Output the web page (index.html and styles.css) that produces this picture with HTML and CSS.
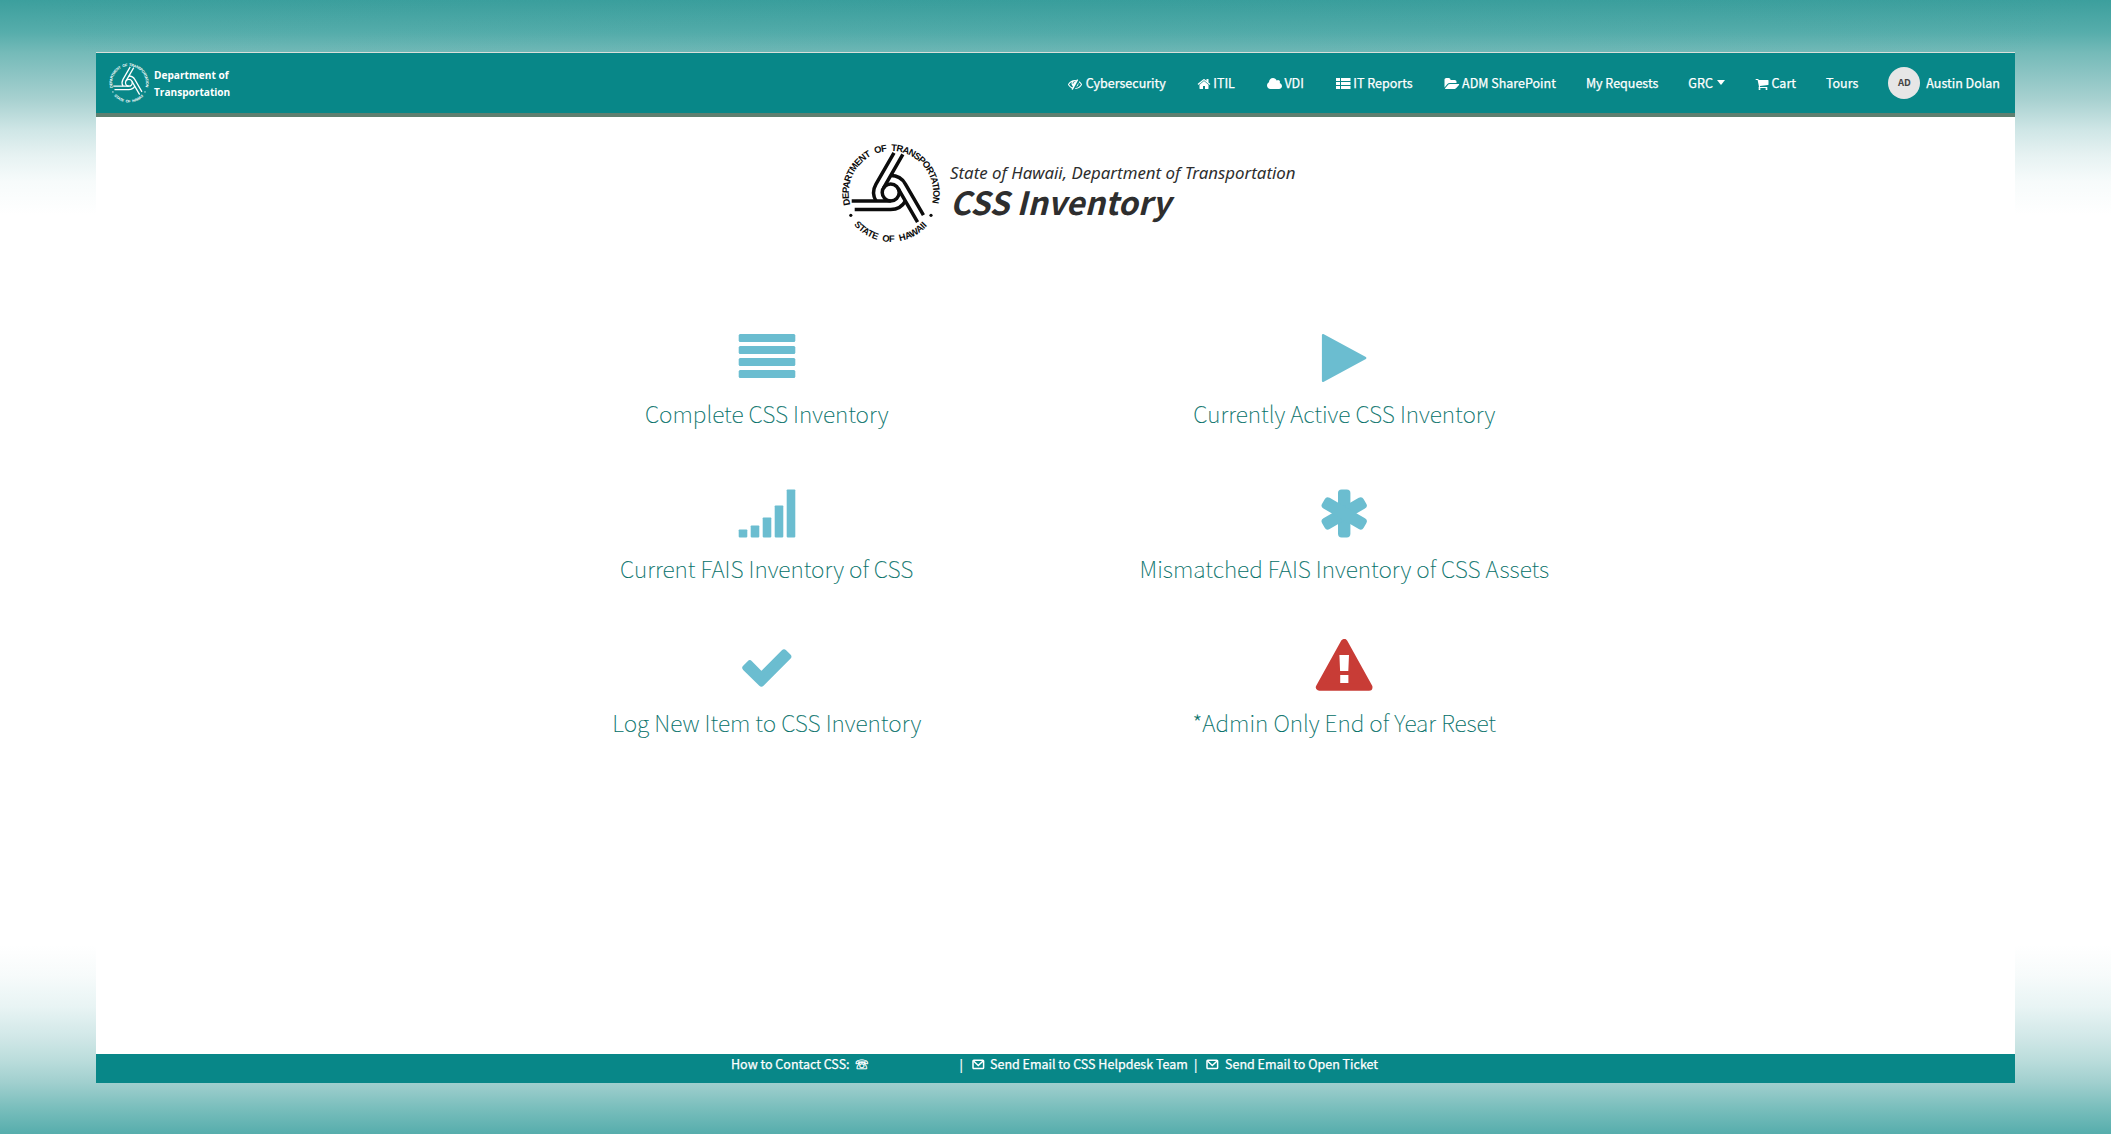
FILE: index.html
```html
<!DOCTYPE html>
<html lang="en">
<head>
<meta charset="utf-8">
<title>CSS Inventory</title>
<link rel="stylesheet" href="styles.css">
</head>
<body>
<div class="page">
  <header class="navbar">
    <a class="brand">
      <svg class="brand-seal" viewBox="-50 -50 100 100">
        <text class="seal-text"><textPath href="#ring-top" textLength="154" lengthAdjust="spacing">DEPARTMENT OF TRANSPORTATION</textPath></text>
        <text class="seal-text"><textPath href="#ring-bottom" textLength="83" lengthAdjust="spacing">STATE OF HAWAII</textPath></text>
        <circle cx="-40.2" cy="22.3" r="1.6" fill="currentColor"/>
        <circle cx="40" cy="22.3" r="1.6" fill="currentColor"/>
        <g transform="translate(-.3 -.5)" fill="none" stroke="currentColor" stroke-width="3.2">
          <circle r="8.5"/>
          <path d="M-39 8.5H0M-36 17H0A17 17 0 0 0 14.8 8.3"/>
          <path transform="rotate(120)" d="M-39 8.5H0M-36 17H0A17 17 0 0 0 14.8 8.3"/>
          <path transform="rotate(240)" d="M-39 8.5H0M-36 17H0A17 17 0 0 0 14.8 8.3"/>
        </g>
      </svg>
      <span class="brand-name">Department of<br>Transportation</span>
    </a>
    <nav class="menu">
      <a class="item"><svg class="fa wide" viewBox="0 0 1792 1792"><path d="M555 1335l78-141q-87-63-136-159t-49-203q0-121 61-225-229 117-381 353 167 258 427 375zm389-759q0-20-14-34t-34-14q-125 0-214.5 89.5t-89.5 214.5q0 20 14 34t34 14 34-14 14-34q0-86 61-147t147-61q20 0 34-14t14-34zm363-191q0 7-1 9-106 189-316 567t-315 566l-49 89q-10 16-28 16-12 0-134-70-16-10-16-28 0-12 44-87-143-65-263.500-173t-208.500-245q-20-31-20-69t20-69q153-235 380-371t496-136q89 0 180 17l54-97q10-16 28-16 5 0 18 6t31 15.500 33 18.500 31.500 18.500 19.500 11.500q16 10 16 27zm37 447q0 139-79 253.500t-209 164.500l280-502q8 45 8 84zm448 128q0 35-20 69-39 64-109 145-150 172-347.500 267t-419.500 95l74-132q212-18 392.500-137t301.500-307q-115-179-282-294l63-112q95 64 182.500 153t144.500 182q20 34 20 69z"/></svg>Cybersecurity</a>
      <a class="item"><svg class="fa home" viewBox="0 0 1792 1792"><path d="M1472 992v480q0 26-19 45t-45 19h-384v-384h-256v384h-384q-26 0-45-19t-19-45v-480q0-1 .5-3t.5-3l575-474 575 474q1 2 1 6zm223-69l-62 74q-8 9-21 11h-3q-13 0-21-7l-692-577-692 577q-12 8-24 7-13-2-21-11l-62-74q-8-10-7-23.500t11-21.500l719-599q32-26 76-26t76 26l244 204v-195q0-14 9-23t23-9h192q14 0 23 9t9 23v408l219 182q10 8 11 21.500t-7 23.500z"/></svg>ITIL</a>
      <a class="item"><svg class="fa wide" viewBox="0 0 1792 1792"><path d="M1920 1152q0 159-112.500 271.500t-271.500 112.500h-1088q-185 0-316.500-131.500t-131.500-316.500q0-132 71-241.500t187-163.500q-2-28-2-43 0-212 150-362t362-150q158 0 286.500 88t187.500 230q70-62 166-62 106 0 181 75t75 181q0 75-41 138 129 30 213 134.500t84 239.500z"/></svg>VDI</a>
      <a class="item"><svg class="fa wide" viewBox="0 0 14 14"><path d="M0 1h4v3H0zM5 1h9.500v3H5zM0 5h4v3H0zM5 5h9.500v3H5zM0 9h4v3H0zM5 9h9.500v3H5z"/></svg>IT Reports</a>
      <a class="item"><svg class="fa folder" viewBox="0 0 1792 1792"><path d="M1943 952q0 31-31 66l-336 396q-43 51-120.500 86.500t-143.500 35.500h-1088q-34 0-60.500-13t-26.500-43q0-31 31-66l336-396q43-51 120.500-86.500t143.500-35.500h1088q34 0 60.500 13t26.500 43zm-343-344v160h-832q-94 0-197 47.500t-164 119.500l-337 396-5 6q0-4-.5-12.500t-.5-12.500v-960q0-92 66-158t158-66h320q92 0 158 66t66 158v32h544q92 0 158 66t66 158z"/></svg>ADM SharePoint</a>
      <a class="item">My Requests</a>
      <a class="item">GRC<span class="caret"></span></a>
      <a class="item"><svg class="fa cart" viewBox="0 0 1792 1792"><path d="M704 1536q0 52-38 90t-90 38-90-38-38-90 38-90 90-38 90 38 38 90zm896 0q0 52-38 90t-90 38-90-38-38-90 38-90 90-38 90 38 38 90zm128-1088v512q0 24-16.500 42.500t-40.500 21.500l-1044 122q13 60 13 70 0 16-24 64h920q26 0 45 19t19 45-19 45-45 19h-1024q-26 0-45-19t-19-45q0-11 8-31.500t16-36 21.500-40 15.500-29.500l-177-823h-204q-26 0-45-19t-19-45 19-45 45-19h256q16 0 28.500 6.500t19.500 15.500 13 24.500 8 26 5.500 29.500 4.500 26h1201q26 0 45 19t19 45z"/></svg>Cart</a>
      <a class="item">Tours</a>
      <a class="item"><span class="avatar">AD</span>Austin Dolan</a>
    </nav>
  </header>
  <main class="content">
    <section class="hero">
      <svg class="hero-seal" viewBox="-50 -50 100 100">
        <path id="ring-top" fill="none" d="M-40.6 11.6A42.2 42.2 0 1 1 40.6 11.6"/>
        <path id="ring-bottom" fill="none" d="M-37.2 31.7A48.9 48.9 0 0 0 37.2 31.7"/>
        <text class="seal-text"><textPath href="#ring-top" textLength="154" lengthAdjust="spacing">DEPARTMENT OF TRANSPORTATION</textPath></text>
        <text class="seal-text"><textPath href="#ring-bottom" textLength="83" lengthAdjust="spacing">STATE OF HAWAII</textPath></text>
        <circle cx="-40.2" cy="22.3" r="1.6" fill="currentColor"/>
        <circle cx="40" cy="22.3" r="1.6" fill="currentColor"/>
        <g transform="translate(-.3 -.5)" fill="none" stroke="currentColor" stroke-width="3.5">
          <circle r="8.5"/>
          <path d="M-39 8.5H0M-36 17H0A17 17 0 0 0 14.8 8.3"/>
          <path transform="rotate(120)" d="M-39 8.5H0M-36 17H0A17 17 0 0 0 14.8 8.3"/>
          <path transform="rotate(240)" d="M-39 8.5H0M-36 17H0A17 17 0 0 0 14.8 8.3"/>
        </g>
      </svg>
      <div class="hero-text">
        <p class="subtitle">State of Hawaii, Department of Transportation</p>
        <h1 class="title">CSS Inventory</h1>
      </div>
    </section>
    <section class="tiles">
      <a class="tile">
        <svg class="tile-icon" viewBox="0 0 60 56"><rect x="1.700" y="4" width="56.600" height="8" rx="1.500"/><rect x="1.700" y="16" width="56.600" height="8" rx="1.500"/><rect x="1.700" y="28" width="56.600" height="8" rx="1.500"/><rect x="1.700" y="40" width="56.600" height="8" rx="1.500"/></svg>
        <span class="tile-name">Complete CSS Inventory</span>
      </a>
      <a class="tile">
        <svg class="tile-icon" viewBox="0 0 60 56"><path stroke-width="2" stroke-linejoin="round" stroke="currentColor" d="M8.900 5v46L51.400 28z"/></svg>
        <span class="tile-name">Currently Active CSS Inventory</span>
      </a>
      <a class="tile">
        <svg class="tile-icon" viewBox="0 0 60 56"><rect x="1.700" y="44.400" width="8.600" height="8" rx=".8"/><rect x="13.700" y="40.400" width="8.600" height="12" rx=".8"/><rect x="25.700" y="32.400" width="8.600" height="20" rx=".8"/><rect x="37.700" y="20.400" width="8.600" height="32" rx=".8"/><rect x="49.700" y="4.400" width="8.600" height="48" rx=".8"/></svg>
        <span class="tile-name">Current FAIS Inventory of CSS</span>
      </a>
      <a class="tile">
        <svg class="tile-icon" viewBox="0 0 60 56"><g transform="translate(30.200 28.400)"><rect x="-6.200" y="-24" width="12.400" height="48" rx="3.600"/><rect x="-6.200" y="-24" width="12.400" height="48" rx="3.600" transform="rotate(60)"/><rect x="-6.200" y="-24" width="12.400" height="48" rx="3.600" transform="rotate(120)"/></g></svg>
        <span class="tile-name">Mismatched FAIS Inventory of CSS Assets</span>
      </a>
      <a class="tile">
        <svg class="tile-icon" viewBox="0 0 60 56"><path stroke="currentColor" stroke-width="6" stroke-linejoin="round" d="M8.300 28.800L12.800 24.300L24.400 36L47 13.400L51.300 17.700L24.400 44.600z"/></svg>
        <span class="tile-name">Log New Item to CSS Inventory</span>
      </a>
      <a class="tile">
        <svg class="tile-icon danger" viewBox="0 0 60 56"><path stroke="currentColor" stroke-width="7" stroke-linejoin="round" d="M30.200 3.500L5.400 48.300H55z"/><path class="mark" d="M25.400 16h9.600l-.7 16h-8.200zM26.200 36h8.200v8h-8.200z"/></svg>
        <span class="tile-name">*Admin Only End of Year Reset</span>
      </a>
    </section>
  </main>
  <footer class="footer">
    <span>How to Contact CSS:</span>
    <span class="phone">☏</span>
    <span>|</span>
    <svg class="mail" viewBox="0 0 13 11"><rect x="1" y="1.200" width="10.600" height="8.400" rx=".8"/><path d="M1.500 2L6.300 6.500L11.100 2"/></svg>
    <span>Send Email to CSS Helpdesk Team</span>
    <span>|</span>
    <svg class="mail" viewBox="0 0 13 11"><rect x="1" y="1.200" width="10.600" height="8.400" rx=".8"/><path d="M1.500 2L6.300 6.500L11.100 2"/></svg>
    <span>Send Email to Open Ticket</span>
  </footer>
</div>
</body>
</html>
```
FILE: styles.css
```css
* {
  box-sizing: border-box;
}

body {
  margin: 0;
  height: 1134px;
  padding: 52px 96px 51px;
  overflow: hidden;
  font: 400 12.5px/19px "Noto Sans CJK JP", sans-serif;
  background:
    radial-gradient(ellipse 1055px 160px at 50% 0, rgba(30, 145, 144, .12), transparent),
    linear-gradient(#3c9f9d 0, #56adab 32px, #74bab8 52px, #a6d0cf 98px, #cfe6e6 130px, #e6f2f2 155px, #f7fbfb 182px, #fff 215px, #fff 945px, #f7fbfb 975px, #e8f4f4 1007px, #d0e7e7 1038px, #bbdddc 1060px, #a0cfce 1083px, #7bbfbd 1107px, #56adac 1134px);
}

.page {
  display: flex;
  flex-direction: column;
  height: 1031px;
  background: #fff;
}

.navbar {
  display: flex;
  justify-content: space-between;
  align-items: center;
  height: 65px;
  padding: 0 15px 0 13px;
  border-top: 1px solid #d9dfda;
  border-bottom: 4px solid #5f7f70;
  background: #088788;
  color: #fff;
}

.brand {
  display: flex;
  align-items: center;
  gap: 5px;
}

.brand-seal {
  width: 40px;
  height: 40px;
  overflow: visible;
}

.brand-name {
  font: 700 10.1px/17.5px "Open Sans", sans-serif;
  padding-top: 2px;
}

.seal-text {
  font: 700 9.4px "Liberation Sans", sans-serif;
  word-spacing: 3px;
  fill: currentColor;
}

.menu {
  display: flex;
  align-items: center;
  gap: 30px;
  padding-bottom: 1px;
  -webkit-text-stroke: .25px #fff;
}

.item {
  display: flex;
  align-items: center;
  white-space: nowrap;
}

.fa {
  width: 14px;
  height: 14px;
  overflow: visible;
  fill: currentColor;
}

.wide {
  margin: 2px 3.5px 0 2px;
}

.folder {
  margin: 2px 4px 0 1.5px;
}

.home {
  margin: 2px 2.5px 0 1px;
}

.cart {
  margin: 2px 2px 0 0;
}

.caret {
  margin-left: 4.5px;
  border: 4.5px solid transparent;
  border-top: 5px solid #fff;
  border-bottom: 0;
}

.avatar {
  width: 32px;
  height: 32px;
  margin-right: 6px;
  border-radius: 50%;
  background: #e6e6e6;
  color: #444;
  font-size: 9.5px;
  font-weight: 700;
  line-height: 31px;
  text-align: center;
  -webkit-text-stroke: 0;
}

.content {
  flex: 1;
}

.hero {
  display: flex;
  gap: 9px;
  height: 126px;
  padding: 26px 0 0 745px;
  color: #2e2e2e;
}

.hero-seal {
  width: 100px;
  height: 100px;
  overflow: visible;
  color: #0c0c0c;
}

.hero-text {
  padding-top: 18px;
}

.subtitle {
  margin: 0;
  font: italic 400 16.85px/24px "Noto Sans", sans-serif;
  white-space: nowrap;
}

.title {
  margin: 0;
  font-size: 32px;
  font-style: italic;
  font-weight: 700;
  line-height: 32px;
}

.tiles {
  display: grid;
  grid-template-columns: repeat(2, 577.6px);
  grid-auto-rows: 154.6px;
  justify-content: center;
  margin-top: 87px;
}

.tile {
  display: flex;
  flex-direction: column;
  align-items: center;
  gap: 12px;
}

.tile-icon {
  width: 60px;
  height: 56px;
  color: #6bbdd0;
  fill: currentColor;
}

.danger {
  color: #c83c36;
}

.mark {
  fill: #fff;
}

.tile-name {
  color: #006e66;
  font-size: 22.9px;
  font-weight: 100;
  line-height: 30px;
  white-space: nowrap;
  -webkit-text-stroke: .15px #006e66;
}

.footer {
  display: grid;
  grid-template-columns: 124.500px 104px 12px 18.500px 204px 12px 19px auto;
  justify-content: start;
  height: 29px;
  padding-left: 635px;
  background: #088788;
  color: #fff;
  white-space: nowrap;
  -webkit-text-stroke: .25px #fff;
}

.phone {
  -webkit-text-stroke: .5px #fff;
}

.mail {
  width: 13px;
  height: 11px;
  margin-top: 5px;
  fill: none;
  stroke: #fff;
  stroke-width: 1.5;
}
```
